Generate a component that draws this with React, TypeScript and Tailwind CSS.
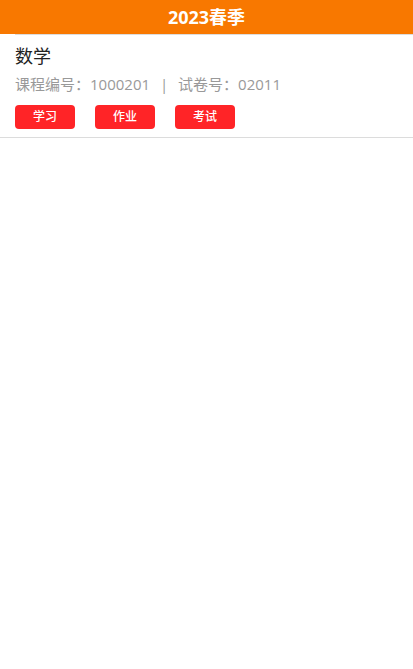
import React from "react";

const actions = ["学习", "作业", "考试"];

function CourseItem() {
  return (
    <div className="border-b border-[#dcdcdc]">
      <div className="ml-[15px] border-t border-[#dcdcdc] pr-[15px] pt-[9px] pb-[8px]">
        <p className="text-[18px] leading-[24px] text-[#222]">数学</p>
        <p className="mt-[6px] text-[15px] leading-[20px] text-[#999]">
          课程编号：1000201 <span className="mx-[6px]">|</span> 试卷号：02011
        </p>
        <div className="mt-[11px] flex gap-[20px]">
          {actions.map((a) => (
            <button
              key={a}
              className="h-[24px] w-[60px] rounded-[4px] bg-[#ff2427] text-[12px] font-medium text-white"
            >
              {a}
            </button>
          ))}
        </div>
      </div>
    </div>
  );
}

export default function App() {
  return (
    <div
      className="min-h-[669px] w-full bg-white"
      style={{ fontFamily: '"Open Sans", "Noto Sans CJK SC", sans-serif' }}
    >
      <header className="flex h-[34px] items-center justify-center bg-[#f87800]">
        <h1 className="text-[18px] font-bold text-white">2023春季</h1>
      </header>
      <CourseItem />
    </div>
  );
}
